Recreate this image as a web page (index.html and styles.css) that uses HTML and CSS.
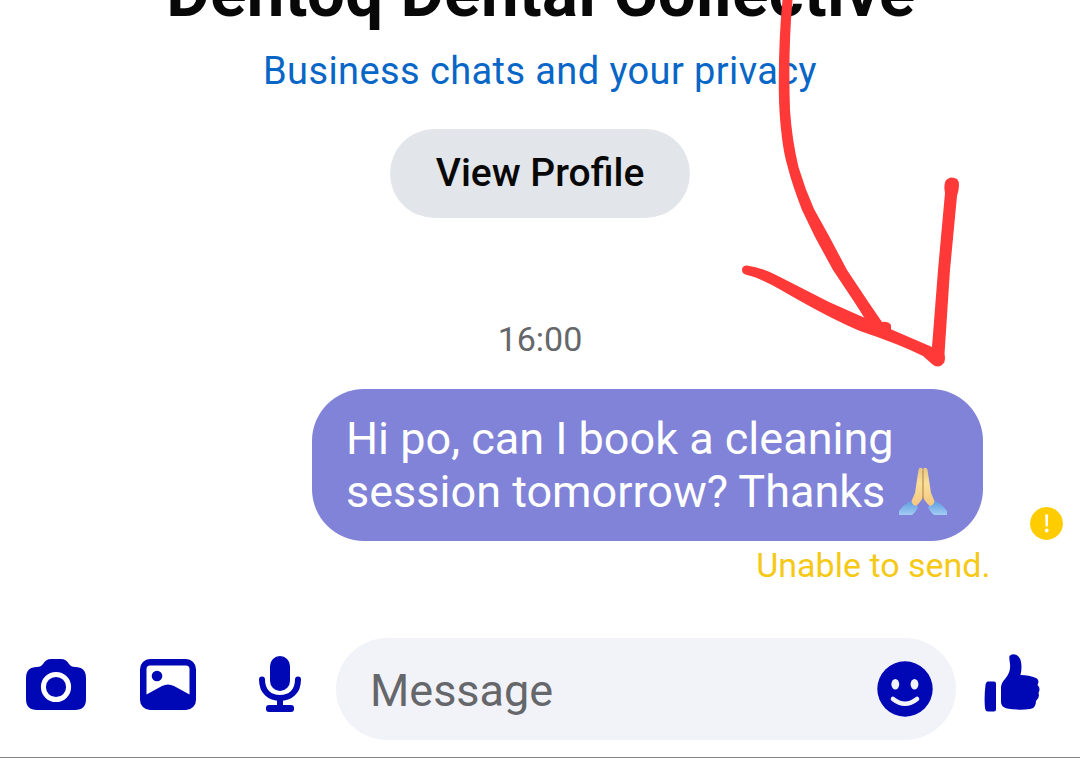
FILE: index.html
```html
<!DOCTYPE html>
<html lang="en">
<head>
<meta charset="utf-8">
<title>Chat</title>
<link rel="stylesheet" href="styles.css">
</head>
<body>
<main class="chat">
  <header class="profile">
    <h1 class="name"><span>Dentoq Dental Collective</span></h1>
    <a class="privacy">Business chats and your privacy</a>
    <button class="view">View Profile</button>
  </header>
  <time class="time">16:00</time>
  <section class="message">
    <div class="bubble">
      <div class="line one">Hi po, can I book a cleaning</div>
      <div class="line two"><span>session tomorrow? Thanks</span>
        <svg class="pray" width="50" height="50" viewBox="0 0 50 50" role="img" aria-label="Folded hands">
          <defs>
            <linearGradient id="sleeve" x1="0" y1="0" x2="0" y2="1"><stop offset="0" stop-color="#5f9de0"/><stop offset="1" stop-color="#a2ccf4"/></linearGradient>
            <linearGradient id="skin" x1="0" y1="0" x2="0" y2="1"><stop offset="0" stop-color="#e8c583"/><stop offset=".4" stop-color="#fbdf98"/><stop offset="1" stop-color="#f3c683"/></linearGradient>
          </defs>
          <path d="M1 48V44Q6 37 13 34L20 40Q18 45 14 48Z" fill="url(#sleeve)"/>
          <path d="M49 48V44Q44 37 37 34L30 40Q32 45 36 48Z" fill="url(#sleeve)"/>
          <path d="M20.500 3Q21 0 24 1L25 3V29Q24 34 18 39Q14 38 13.500 34L17 26Z" fill="url(#skin)"/>
          <path d="M29.500 3Q29 0 26 1L25 3V29Q26 34 32 39Q36 38 36.500 34L33 26Z" fill="url(#skin)"/>
          <path d="M25 3V32" fill="none" stroke="#b98f50" stroke-width="1.200"/>
        </svg>
      </div>
    </div>
    <svg class="alert" width="33" height="33" viewBox="0 0 33 33"><circle cx="16.5" cy="16.5" r="16.4" fill="#ffcc00"/><path d="M15.200 7.500h3l-.4 12h-2.200z" fill="#fff"/><circle cx="16.700" cy="23.500" r="1.900" fill="#fff"/></svg>
  </section>
  <p class="status">Unable to send.</p>
  <footer class="composer">
    <svg class="camera" width="60" height="51" viewBox="0 0 60 51"><path fill="#0007b5" d="M11 8Q15 8 17 5Q20 0 25 0H35Q40 0 43 5Q45 8 49 8Q60 8 60 19V40Q60 51 49 51H11Q0 51 0 40V19Q0 8 11 8Z"/><circle cx="30" cy="28" r="12.6" fill="#0007b5" stroke="#fff" stroke-width="5"/></svg>
    <svg class="photo" width="56" height="51" viewBox="0 0 56 51"><rect width="56" height="51" rx="10" fill="#0007b5"/><path fill="#fff" d="M10 6.500H46Q49.500 6.500 49.500 10V35.500L34 27Q28 24 22 27L6.500 35.500V10Q6.500 6.500 10 6.500Z"/><circle cx="17" cy="17" r="5.300" fill="#0007b5"/></svg>
    <svg class="mic" width="44" height="56" viewBox="0 0 44 56"><rect x="12" y="0" width="20" height="35" rx="10" fill="#0007b5"/><path d="M4 23.500C4 36 12 42 22 42S40 36 40 23.500M22 42V52" fill="none" stroke="#0007b5" stroke-width="6" stroke-linecap="round"/><rect x="8" y="49" width="28" height="7" rx="3" fill="#0007b5"/></svg>
    <div class="field">
      <span class="hint">Message</span>
      <svg width="56" height="56" viewBox="0 0 56 56"><circle cx="28" cy="28" r="27.700" fill="#0007b5"/><ellipse cx="18.300" cy="23.300" rx="3.900" ry="5.200" fill="#f2f3f8"/><ellipse cx="37.500" cy="23.300" rx="3.900" ry="5.200" fill="#f2f3f8"/><path d="M16 38Q28 47.500 40 38" fill="none" stroke="#f2f3f8" stroke-width="4.600" stroke-linecap="round"/></svg>
    </div>
    <svg class="like" width="56" height="58" viewBox="0 0 56 58"><path fill="#0007b5" d="M4 27.500H10Q12 27.500 12 29.500V55.500Q12 57.500 10 57.500H4Q1.500 57.500 1 54Q0 43 1.500 31Q2 27.500 4 27.500ZM25.500 2Q27.500-.5 31 .5Q37 2 37.500 12Q37.500 17 36.500 21Q45 21 52 24Q56 26 53.500 31Q57 34 54.500 39Q56 44 52 47Q52 54 46 55Q34 56.500 23 54.500Q17 53 17 48V34Q17 29 21 25Q27 18 26 10Q25 4 25.500 2Z"/></svg>
  </footer>
  <svg class="arrow" width="1080" height="758" viewBox="0 0 1080 758" fill="#ff3838">
    <path d="M782.500 0Q778.500 40 778.800 90Q779 115 782 138Q784 155 788 168Q792 184 802 210L815 237L833 270L855 303L867 322L885 334L891 330V325Q888 321 882 322L869 303L847 270L829 236L814 209Q805 189 798.500 167Q792 140 790 110Q788 50 792.500 0Z"/>
    <path d="M747 265.500Q742 265.500 742 270Q742 274 747 275Q760 278 781 290Q829 318 860 331Q899 344 923 356L932 364Q938 369 943 364Q946 361 944.500 354L950 270L957 196Q961 183 957 179Q950 175 945.500 181Q943.500 186 945 193L938 270L932 347L888 328Q858 315 829 302L780 277Q764 268 747 265.500Z"/>
  </svg>
</main>
</body>
</html>
```
FILE: styles.css
```css
* { box-sizing: border-box; }
body { margin: 0; background: #fff; font-family: Roboto, sans-serif; }
.chat { position: relative; width: 1080px; height: 758px; overflow: hidden; display: flex; flex-direction: column; border-bottom: 1px solid #858585; }
.profile { display: flex; flex-direction: column; align-items: center; margin-top: -37px; }
.name { margin: 0; font-size: 67px; line-height: 60px; font-weight: 700; color: #080808; letter-spacing: 0.4px; padding-left: 2px; white-space: nowrap; }
.privacy { margin-top: 26px; font-size: 38px; line-height: 44px; color: #0866c6; letter-spacing: 0.4px; white-space: nowrap; }
.view { margin-top: 36px; width: 300px; height: 89px; border: 0; padding: 0; border-radius: 45px; background: #e2e5e9; color: #080808; font: 500 39px/89px Roboto, sans-serif; }
.time { margin-top: 99px; text-align: center; font-size: 34px; line-height: 44px; color: #65676b; }
.message { display: flex; justify-content: flex-end; align-items: flex-end; gap: 46.5px; margin-top: 28px; padding-right: 17.5px; }
.bubble { width: 671px; height: 152px; padding: 23px 34px; border-radius: 52px; background: #8083d7; color: #fff; }
.line { display: flex; height: 53px; font-size: 45px; line-height: 53px; white-space: nowrap; }
.pray { margin: 2px 0 0 13px; flex: none; }
.alert { flex: none; margin-bottom: 1px; }
.status { margin: 2px 89.5px 0 0; text-align: right; font-size: 34px; line-height: 44px; color: #f5c916; white-space: nowrap; }
.composer { display: flex; align-items: center; height: 102px; margin-top: 51px; padding-left: 26px; }
.composer svg { flex: none; }
.camera, .photo, .mic { margin-bottom: 10px; }
.photo { margin-left: 54px; }
.mic { margin-left: 62px; }
.field { display: flex; align-items: center; justify-content: space-between; width: 620px; height: 102px; margin-left: 34px; padding: 0 23px 0 34px; border-radius: 51px; background: #f2f3f8; }
.hint { padding-top: 3px; font-size: 45px; line-height: 52px; color: #65676b; }
.like { margin: 0 0 12px 28px; }
.arrow { position: absolute; left: 0; top: 0; pointer-events: none; }
```
